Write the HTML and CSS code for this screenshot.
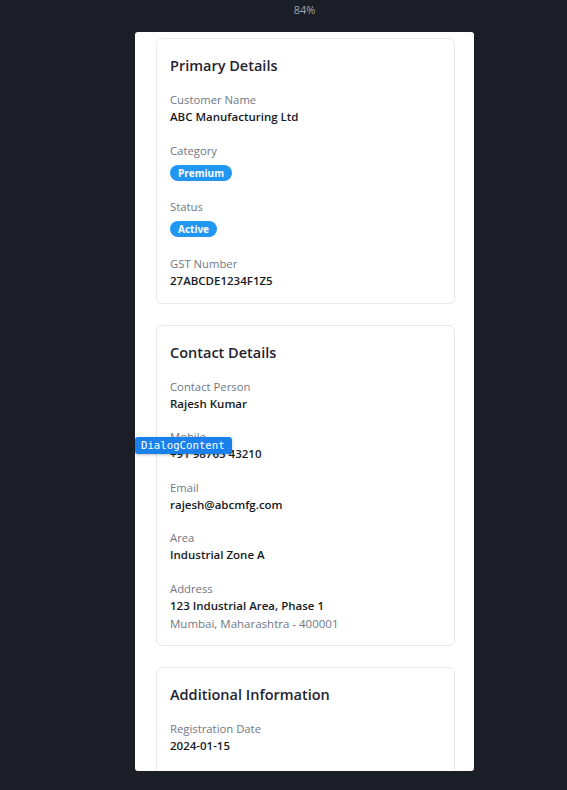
FILE: index.html
```html
<!DOCTYPE html>
<html lang="en">
<head>
<meta charset="utf-8">
<title>Customer Details</title>
<link rel="stylesheet" href="styles.css">
</head>
<body>
<div class="stage">
  <div class="zoom-label">84%</div>
  <div class="dialog">
    <div class="dialog-scroll">
      <section class="card">
        <h3 class="card-title">Primary Details</h3>
        <div class="fields">
          <div class="field">
            <div class="label">Customer Name</div>
            <div class="value">ABC Manufacturing Ltd</div>
          </div>
          <div class="field">
            <div class="label">Category</div>
            <div class="badge-row"><span class="badge">Premium</span></div>
          </div>
          <div class="field">
            <div class="label">Status</div>
            <div class="badge-row"><span class="badge">Active</span></div>
          </div>
          <div class="field">
            <div class="label">GST Number</div>
            <div class="value">27ABCDE1234F1Z5</div>
          </div>
        </div>
      </section>

      <section class="card">
        <h3 class="card-title">Contact Details</h3>
        <div class="fields">
          <div class="field">
            <div class="label">Contact Person</div>
            <div class="value">Rajesh Kumar</div>
          </div>
          <div class="field">
            <div class="label">Mobile</div>
            <div class="value">+91 98765 43210</div>
          </div>
          <div class="field">
            <div class="label">Email</div>
            <div class="value">rajesh@abcmfg.com</div>
          </div>
          <div class="field">
            <div class="label">Area</div>
            <div class="value">Industrial Zone A</div>
          </div>
          <div class="field">
            <div class="label">Address</div>
            <div class="value">123 Industrial Area, Phase 1</div>
            <div class="sub">Mumbai, Maharashtra - 400001</div>
          </div>
        </div>
      </section>

      <section class="card">
        <h3 class="card-title">Additional Information</h3>
        <div class="fields">
          <div class="field">
            <div class="label">Registration Date</div>
            <div class="value">2024-01-15</div>
          </div>
          <div class="field">
            <div class="label">Last Updated</div>
            <div class="value">2024-03-10</div>
          </div>
        </div>
      </section>
    </div>
    <div class="devtag">DialogContent</div>
  </div>
</div>
</body>
</html>
```

FILE: styles.css
```css
* { box-sizing: border-box; }

html, body {
  margin: 0;
  padding: 0;
  background: #1b1e27;
  height: 790px;
  overflow: hidden;
}

body {
  font-family: "Open Sans", "Noto Sans", sans-serif;
}

.stage {
  margin-left: 135px;
  width: 339px;
}

.zoom-label {
  height: 32px;
  padding-top: 2px;
  text-align: center;
  color: #a0a4ad;
  font-size: 11px;
  line-height: 16px;
}

.dialog {
  position: relative;
  height: 739px;
  background: #ffffff;
  border-radius: 3px;
  overflow: hidden;
}

.dialog-scroll {
  padding: 6px 19px 0 21px;
  display: flex;
  flex-direction: column;
  gap: 21px;
}

.card {
  border: 1px solid #e6e8ec;
  border-radius: 6px;
  padding: 17px 13px 13px;
}

.card-title {
  margin: 0 0 15px;
  font-size: 14.5px;
  line-height: 20px;
  font-weight: 600;
  color: #1f2430;
}

.fields {
  display: flex;
  flex-direction: column;
  gap: 15.5px;
}

.label {
  font-size: 11.3px;
  line-height: 17px;
  color: #717784;
}

.value {
  font-size: 11.5px;
  line-height: 18px;
  font-weight: 600;
  color: #161a23;
}

.sub {
  font-size: 11.5px;
  line-height: 17px;
  color: #717784;
}

.badge-row {
  display: flex;
  margin-top: 6px;
  margin-bottom: 2px;
}

.badge {
  display: inline-flex;
  align-items: center;
  height: 16px;
  padding: 0 8px;
  border-radius: 8px;
  background: #2196f3;
  color: #ffffff;
  font-size: 10px;
  font-weight: 700;
  line-height: 16px;
}

.devtag {
  position: absolute;
  left: 0;
  top: 405px;
  height: 17px;
  width: 97px;
  padding-left: 6px;
  background: #1a80ec;
  border-radius: 3px;
  color: #ffffff;
  font-family: "DejaVu Sans Mono", monospace;
  font-size: 10.7px;
  line-height: 17px;
  box-shadow: 0 1px 3px rgba(0,0,0,0.25);
}
```
